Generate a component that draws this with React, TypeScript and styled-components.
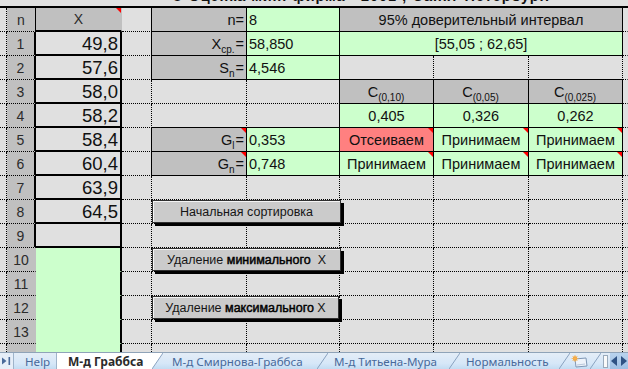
import React from "react";
import styled, { createGlobalStyle, css } from "styled-components";

const GlobalStyle = createGlobalStyle`
  html, body { margin: 0; padding: 0; background: #e0e0e0; }
  body { width: 628px; height: 369px; overflow: hidden; font-family: "Liberation Sans", Arial, sans-serif; }
`;

type Fill = "bg" | "gray" | "green" | "red";
type Line = "dot" | "thin" | "thick" | "none";
type Align = "l" | "c" | "r";
type Kind = "txt" | "num" | "big";

interface Spec {
  t?: React.ReactNode;
  f: Fill;
  r: Line;
  b: Line;
  a?: Align;
  span?: number;
  tri?: boolean;
  k?: Kind;
}

const fills: Record<Fill, string> = {
  bg: "#e0e0e0",
  gray: "#c0c0c0",
  green: "#ccffcc",
  red: "#ff8080",
};

const lines: Record<Line, string> = {
  dot: "1px dotted #000",
  thin: "1px solid #000",
  thick: "2px solid #000",
  none: "1px solid transparent",
};

const justify: Record<Align, string> = { l: "flex-start", c: "center", r: "flex-end" };
const sizes: Record<Kind, string> = { txt: "14.5px", num: "14px", big: "18.5px" };

const Window = styled.div`
  width: 628px;
  height: 369px;
  display: flex;
  flex-direction: column;
  overflow: hidden;
  background: #e0e0e0;
`;

const SheetArea = styled.div`
  position: relative;
  flex: none;
  height: 352px;
  overflow: hidden;
`;

const Grid = styled.div`
  display: grid;
  grid-template-columns: 7px 29px 86px 30px 95px 93px 94px 95px 94px 5px;
  grid-template-rows: 8px repeat(15, 24px);
`;

const TitleCell = styled.div`
  grid-column: 1 / -1;
  box-sizing: border-box;
  border-bottom: 2px solid #000;
  overflow: hidden;
  display: flex;
  align-items: flex-end;
  padding: 0 0 3px 172px;
  font-weight: 700;
  font-size: 14.5px;
  line-height: 14px;
  letter-spacing: 0.9px;
  color: #111;
  white-space: nowrap;
`;

const Cell = styled.div<{
  $f: Fill;
  $r: Line;
  $b: Line;
  $a: Align;
  $span: number;
  $tri: boolean;
  $k: Kind;
}>`
  position: relative;
  box-sizing: border-box;
  grid-column: span ${(p) => p.$span};
  background: ${(p) => fills[p.$f]};
  border-right: ${(p) => lines[p.$r]};
  border-bottom: ${(p) => lines[p.$b]};
  display: flex;
  align-items: center;
  justify-content: ${(p) => justify[p.$a]};
  padding: 1px 2px 0;
  font-size: ${(p) => sizes[p.$k]};
  color: ${(p) => (p.$k === "num" ? "#2b2b2b" : "#111")};
  white-space: nowrap;
  overflow: hidden;
  ${(p) =>
    p.$tri &&
    css`
      &::after {
        content: "";
        position: absolute;
        top: 0;
        right: 0;
        border-top: 5px solid #ff0000;
        border-left: 5px solid transparent;
      }
    `}
`;

const CellText = styled.span`
  display: block;
  line-height: 1.15;
`;

const Sub = styled.sub`
  font-size: 10px;
  vertical-align: -4px;
  line-height: 0;
  margin: 0 1px 0 0;
`;

const SheetButton = styled.div<{ $top: number; $w: number }>`
  position: absolute;
  left: 152px;
  top: ${(p) => p.$top}px;
  width: ${(p) => p.$w}px;
  height: 23px;
  box-sizing: border-box;
  background: #cbcbcb;
  border: 1px solid #303030;
  box-shadow: inset 1px 1px 0 #f4f4f4, 3px 3px 0 #000;
  display: flex;
  align-items: center;
  justify-content: center;
  font-size: 12.5px;
  color: #151515;
  white-space: pre;
`;

const Strong = styled.span`
  color: #000;
  -webkit-text-stroke: 0.45px #000;
`;

/* ---------- Tab bar ---------- */

const TabBar = styled.div`
  flex: none;
  height: 17px;
  box-sizing: border-box;
  border-top: 1px solid #8fa3b8;
  display: flex;
  align-items: stretch;
  background: linear-gradient(#e4edf7, #d6e7f8 65%, #c3dcf2);
  font-family: "Noto Sans", "Liberation Sans", sans-serif;
  font-size: 11.6px;
`;

const NavBox = styled.div`
  width: 14px;
  flex: none;
  box-sizing: border-box;
  border-right: 1px solid #9fb4ca;
  display: flex;
  align-items: center;
  justify-content: center;
  background: #e6eef8;
`;

const Tab = styled.div<{ $w: number; $pl: number; $active?: boolean }>`
  width: ${(p) => p.$w}px;
  flex: none;
  box-sizing: border-box;
  padding-left: ${(p) => p.$pl}px;
  display: flex;
  align-items: center;
  line-height: 1;
  padding-top: 1px;
  color: ${(p) => (p.$active ? "#2a2a2a" : "#48699a")};
  font-weight: ${(p) => (p.$active ? 700 : 400)};
  font-size: ${(p) => (p.$active ? "12px" : "inherit")};
  background: ${(p) => (p.$active ? "#ffffff" : "transparent")};
  border-left: ${(p) => (p.$active ? "1px solid #9fb4ca" : "none")};
  white-space: nowrap;
`;

const SlantBox = styled.svg`
  flex: none;
  display: block;
`;

const Splitter = styled.div`
  width: 9px;
  flex: none;
  display: flex;
  align-items: center;
  justify-content: center;
`;

const SplitGrip = styled.div`
  width: 3px;
  height: 11px;
  background: #fafafa;
  border: 1px solid #9aaabb;
`;

const ArrowBox = styled.div`
  flex: 1;
  display: flex;
  align-items: center;
  justify-content: space-around;
  background: linear-gradient(#b9d3ee, #9fc0e4);
`;

const Slant: React.FC<{ active?: boolean }> = ({ active }) => (
  <SlantBox width="11" height="16" viewBox="0 0 11 16">
    {active && <polygon points="0,0 11,0 0,16" fill="#ffffff" />}
    <line x1="0" y1="16" x2="11" y2="0" stroke="#8aa3c0" strokeWidth="1" />
  </SlantBox>
);

/* ---------- data ---------- */

const A: Spec = { f: "bg", r: "dot", b: "dot" };
const R: Spec = { f: "bg", r: "none", b: "dot" };
const D: Spec = { f: "bg", r: "dot", b: "dot" };

const n = (t: React.ReactNode, r: Line): Spec => ({ t, f: "gray", r, b: "dot", a: "c", k: "num" });
const xv = (t?: string): Spec => ({ t, f: "bg", r: "thick", b: "thick", a: "r", k: "big" });
const xg: Spec = { f: "green", r: "thick", b: "none" };
const lab = (t: React.ReactNode, tri = false): Spec => ({ t, f: "gray", r: "thin", b: "thin", a: "r", tri });
const val = (t: string): Spec => ({ t, f: "green", r: "thin", b: "thin", a: "l" });
const res = (t: string, f: Fill = "green"): Spec => ({ t, f, r: "thin", b: "thin", a: "c", tri: true });
const cH = (s: string): Spec => ({
  t: (
    <>
      C<Sub>{s}</Sub>
    </>
  ),
  f: "gray",
  r: "thin",
  b: "thin",
  a: "c",
});
const cV = (t: string): Spec => ({ t, f: "green", r: "thin", b: "thin", a: "c" });

const xs = ["49,8", "57,6", "58,0", "58,2", "58,4", "60,4", "63,9", "64,5"];

const rows: Spec[][] = [
  [
    A,
    n("n", "thin"),
    { t: "X", f: "gray", r: "none", b: "thick", a: "c", tri: true, k: "num" },
    { f: "bg", r: "thin", b: "dot" },
    lab("n="),
    val("8"),
    { t: "95% доверительный интервал", f: "gray", r: "thin", b: "thin", a: "c", span: 3 },
    R,
  ],
  [
    A,
    n("1", "thick"),
    xv(xs[0]),
    { f: "bg", r: "thin", b: "dot" },
    lab(
      <>
        X<Sub>ср.</Sub>=
      </>
    ),
    val("58,850"),
    { t: "[55,05 ; 62,65]", f: "green", r: "thin", b: "thin", a: "c", span: 3 },
    R,
  ],
  [
    A,
    n("2", "thick"),
    xv(xs[1]),
    { f: "bg", r: "thin", b: "dot" },
    lab(
      <>
        S<Sub>n</Sub>=
      </>
    ),
    val("4,546"),
    { f: "bg", r: "dot", b: "thin" },
    { f: "bg", r: "dot", b: "thin" },
    { f: "bg", r: "dot", b: "thin" },
    R,
  ],
  [
    A,
    n("3", "thick"),
    xv(xs[2]),
    D,
    D,
    { f: "bg", r: "thin", b: "dot" },
    cH("(0,10)"),
    cH("(0,05)"),
    cH("(0,025)"),
    R,
  ],
  [
    A,
    n("4", "thick"),
    xv(xs[3]),
    D,
    { f: "bg", r: "dot", b: "thin" },
    { f: "bg", r: "thin", b: "thin" },
    cV("0,405"),
    cV("0,326"),
    cV("0,262"),
    R,
  ],
  [
    A,
    n("5", "thick"),
    xv(xs[4]),
    { f: "bg", r: "thin", b: "dot" },
    lab(
      <>
        G<Sub>l</Sub>=
      </>,
      true
    ),
    val("0,353"),
    res("Отсеиваем", "red"),
    res("Принимаем"),
    res("Принимаем"),
    R,
  ],
  [
    A,
    n("6", "thick"),
    xv(xs[5]),
    { f: "bg", r: "thin", b: "dot" },
    lab(
      <>
        G<Sub>n</Sub>=
      </>,
      true
    ),
    val("0,748"),
    res("Принимаем"),
    res("Принимаем"),
    res("Принимаем"),
    R,
  ],
  [A, n("7", "thick"), xv(xs[6]), D, D, D, D, D, D, R],
  [A, n("8", "thick"), xv(xs[7]), D, D, D, D, D, D, R],
  [A, n("9", "thick"), xv(), D, D, D, D, D, D, R],
  [A, n("10", "none"), xg, D, D, D, D, D, D, R],
  [A, n("11", "none"), xg, D, D, D, D, D, D, R],
  [A, n("12", "none"), xg, D, D, D, D, D, D, R],
  [A, n("13", "none"), xg, D, D, D, D, D, D, R],
  [A, n("", "none"), xg, D, D, D, D, D, D, R],
];

const tabs = [
  { label: "М-д Смирнова-Граббса", w: 154, pl: 9 },
  { label: "М-д Титьена-Мура", w: 121, pl: 6 },
  { label: "Нормальность", w: 99, pl: 6 },
];

export default function App() {
  return (
    <>
      <GlobalStyle />
      <Window>
        <SheetArea>
          <Grid>
            <TitleCell>© Оценка мин. фирма - 2001 ; Санкт-Петербург.</TitleCell>
            {rows.flatMap((row, ri) =>
              row.map((s, ci) => (
                <Cell
                  key={`${ri}-${ci}`}
                  $f={s.f}
                  $r={s.r}
                  $b={s.b}
                  $a={s.a ?? "l"}
                  $span={s.span ?? 1}
                  $tri={!!s.tri}
                  $k={s.k ?? "txt"}
                >
                  {s.t !== undefined && <CellText>{s.t}</CellText>}
                </Cell>
              ))
            )}
          </Grid>
          <SheetButton $top={200} $w={189}>
            Начальная сортировка
          </SheetButton>
          <SheetButton $top={248} $w={189}>
            Удаление <Strong>минимального</Strong>  X
          </SheetButton>
          <SheetButton $top={296} $w={187}>
            Удаление <Strong>максимального</Strong> X
          </SheetButton>
        </SheetArea>
        <TabBar>
          <NavBox>
            <svg width="11" height="10" viewBox="0 0 11 10">
              <polygon points="1,1.5 5.5,5 1,8.5" fill="#4a6a9a" />
              <rect x="7.5" y="1" width="1.6" height="8" fill="#4a6a9a" />
            </svg>
          </NavBox>
          <Tab $w={42} $pl={11}>
            Help
          </Tab>
          <Tab $w={96} $pl={11} $active>
            М-д Граббса
          </Tab>
          <Slant active />
          {tabs.map((t) => (
            <React.Fragment key={t.label}>
              <Tab $w={t.w} $pl={t.pl}>
                {t.label}
              </Tab>
              <Slant />
            </React.Fragment>
          ))}
          <Tab $w={20} $pl={1}>
            <svg width="17" height="13" viewBox="0 0 17 13">
              <polygon points="4,4 15,3 16,11 5,12" fill="#eef3fa" stroke="#7f97b5" strokeWidth="1" />
              <line x1="6" y1="10" x2="14" y2="9" stroke="#b8c8dc" strokeWidth="1" />
              <circle cx="4" cy="3.5" r="2.2" fill="#f29a2e" />
              <path d="M4 0 V7 M0.5 3.5 H7.5 M1.5 1 L6.5 6 M6.5 1 L1.5 6" stroke="#f5b454" strokeWidth="0.8" />
            </svg>
          </Tab>
          <Slant />
          <Splitter>
            <SplitGrip />
          </Splitter>
          <ArrowBox>
            <svg width="7" height="10" viewBox="0 0 7 10">
              <polygon points="6,0 0,5 6,10" fill="#2f5284" />
            </svg>
            <svg width="7" height="10" viewBox="0 0 7 10">
              <polygon points="1,0 7,5 1,10" fill="#2f5284" />
            </svg>
          </ArrowBox>
        </TabBar>
      </Window>
    </>
  );
}
